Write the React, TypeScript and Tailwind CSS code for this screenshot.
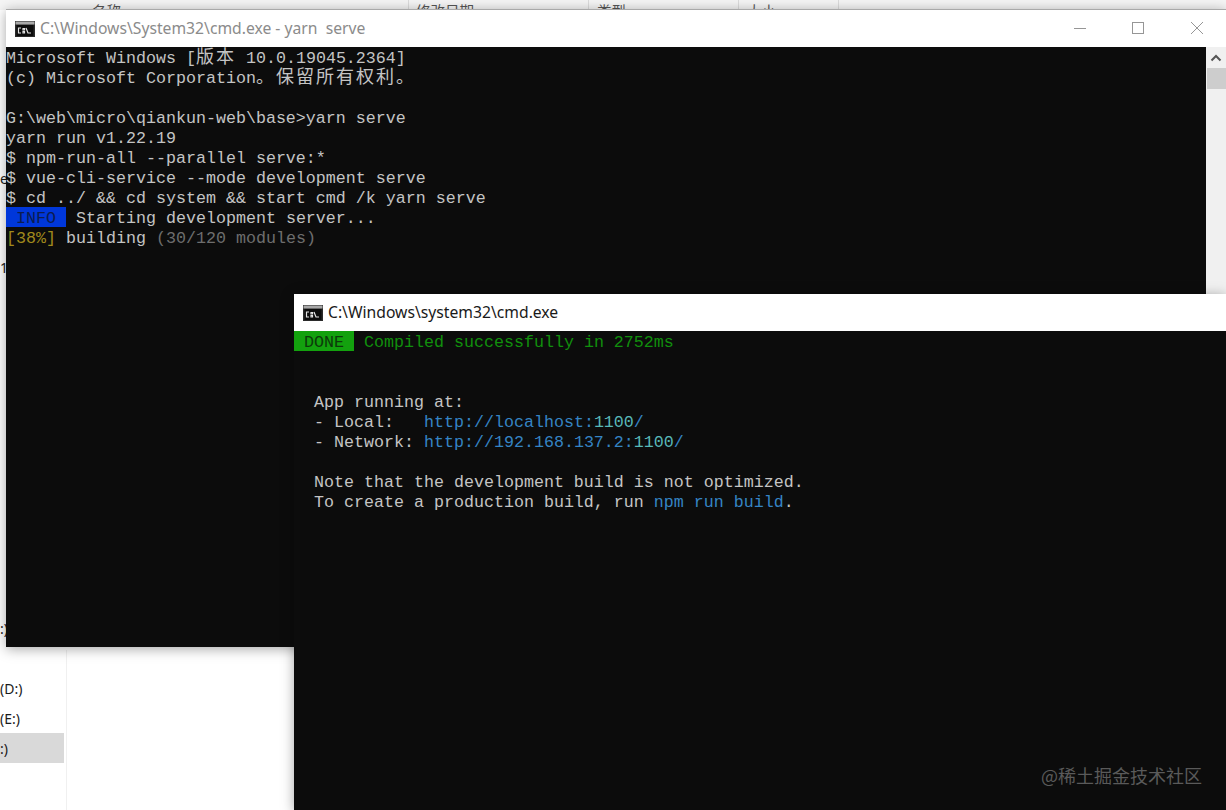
import React from 'react'

const mono = 'font-["Liberation_Mono","Noto_Sans_CJK_SC",monospace] text-[16.67px] leading-6 h-5 whitespace-pre'
const cjk = 'font-["Noto_Sans_CJK_SC",sans-serif] text-[18px] tracking-[2px] leading-[0]'
const ui = 'font-["Noto_Sans","Liberation_Sans",sans-serif]'
const cjkUi = 'font-["Noto_Sans_CJK_SC",sans-serif]'

function CmdIcon() {
  return (
    <svg width="20" height="16" viewBox="0 0 20 16" className="shrink-0">
      <rect width="20" height="16" fill="#2b2b2b" />
      <rect x="0.5" y="0.5" width="19" height="3" fill="#a8a8a8" />
      <rect x="1.5" y="4" width="17" height="11" fill="#0c0c0c" />
      <path d="M6 7H3.5v5H6M8 7.5h1.5v1.5H8zM8 10.5h1.5V12H8zM11 7l2 5h3" fill="none" stroke="#e4e4e4" strokeWidth="1.2" />
    </svg>
  )
}

function Line({ children }: { children?: React.ReactNode }) {
  return <div className={mono}>{children}</div>
}

function FirstWindow() {
  return (
    <div className="absolute left-[6px] top-[9px] w-[1220px] h-[638px] flex flex-col border-t border-[#a9a9a9] shadow-[0_2px_12px_rgba(0,0,0,0.35)]">
      <div className="h-[37px] bg-white flex items-center pl-[9px] shrink-0">
        <CmdIcon />
        <span className={`${ui} ml-[5px] text-[15.7px] text-[#8b8b8b]`}>C:\Windows\System32\cmd.exe - yarn&nbsp; serve</span>
        <div className="ml-auto -mt-px flex items-center text-[#969696]">
          <svg width="14" height="14" viewBox="0 0 14 14" className="mr-[44px]">
            <path d="M1 7.5h12" stroke="currentColor" />
          </svg>
          <svg width="14" height="14" viewBox="0 0 14 14" className="mr-[45px]">
            <rect x="1.5" y="1.5" width="11" height="11" fill="none" stroke="currentColor" />
          </svg>
          <svg width="14" height="14" viewBox="0 0 14 14" className="mr-[22px]">
            <path d="M1 1l12 12M13 1L1 13" stroke="currentColor" />
          </svg>
        </div>
      </div>
      <div className="flex-1 flex min-h-0">
        <div className="flex-1 bg-[#0c0c0c] text-[#c4c4c4]">
          <Line>Microsoft Windows [<span className={cjk}>版本</span> 10.0.19045.2364]</Line>
          <Line>(c) Microsoft Corporation<span className={cjk}>。保留所有权利。</span></Line>
          <Line />
          <Line>G:\web\micro\qiankun-web\base&gt;yarn serve</Line>
          <Line>yarn run v1.22.19</Line>
          <Line>$ npm-run-all --parallel serve:*</Line>
          <Line>$ vue-cli-service --mode development serve</Line>
          <Line>$ cd ../ &amp;&amp; cd system &amp;&amp; start cmd /k yarn serve</Line>
          <Line>
            <span className="inline-block h-5 bg-[#0037da] text-[#0c1c50]"> INFO </span> Starting development server...
          </Line>
          <Line>
            <span className="text-[#a08a1c]">[38%]</span> building <span className="text-[#6e6e6e]">(30/120 modules)</span>
          </Line>
        </div>
        <div className="w-5 bg-[#f0f0f0] flex flex-col shrink-0">
          <div className="h-[21px] flex items-center justify-center">
            <svg width="12" height="8" viewBox="0 0 12 8">
              <path d="M1.5 6.5L6 2l4.5 4.5" fill="none" stroke="#555" strokeWidth="2" />
            </svg>
          </div>
          <div className="h-[21px] bg-[#cdcdcd] ml-[1px]" />
        </div>
      </div>
    </div>
  )
}

function SecondWindow() {
  return (
    <div className="absolute left-[294px] top-[294px] right-0 bottom-0 flex flex-col shadow-[0_2px_12px_rgba(0,0,0,0.35)]">
      <div className="h-[37px] bg-white flex items-center pl-[9px] shrink-0">
        <CmdIcon />
        <span className={`${ui} ml-[5px] text-[15.7px] text-[#1a1a1a]`}>C:\Windows\system32\cmd.exe</span>
      </div>
      <div className="flex-1 bg-[#0c0c0c] text-[#c4c4c4] relative">
        <Line>
          <span className="inline-block h-5 bg-[#13a10e] text-[#0c3a0a]"> DONE </span> <span className="text-[#118f0d]">Compiled successfully in 2752ms</span>
        </Line>
        <Line />
        <Line />
        <Line>  App running at:</Line>
        <Line>  - Local:   <span className="text-[#3584c4]">http://localhost:<span className="text-[#58b8b8]">1100</span>/</span></Line>
        <Line>  - Network: <span className="text-[#3584c4]">http://192.168.137.2:<span className="text-[#58b8b8]">1100</span>/</span></Line>
        <Line />
        <Line>  Note that the development build is not optimized.</Line>
        <Line>  To create a production build, run <span className="text-[#3584c4]">npm run build</span>.</Line>
        <span className={`${cjkUi} absolute right-[24px] bottom-[23px] text-[18px] leading-6 text-[#5a5a5a]`}>@稀土掘金技术社区</span>
      </div>
    </div>
  )
}

export default function App() {
  return (
    <div className={`${ui} relative w-[1226px] h-[810px] overflow-hidden bg-white text-[#1a1a1a]`}>
      {/* explorer behind the consoles */}
      <div className={`${cjkUi} flex h-[10px] bg-[#f5f5f5] overflow-hidden text-[14.5px] text-[#555] leading-[18px]`}>
        <div className="w-[409px] border-r border-[#dcdcdc] pl-[92px] pt-[2px]">名称</div>
        <div className="w-[180px] border-r border-[#dcdcdc] pl-[7px] pt-[2px]">修改日期</div>
        <div className="w-[150px] border-r border-[#dcdcdc] pl-[8px] pt-[2px]">类型</div>
        <div className="w-[100px] border-r border-[#dcdcdc] pl-[8px] pt-[2px]">大小</div>
      </div>
      <div className="absolute left-0 top-[170px] text-[14px] leading-[18px]">e</div>
      <div className="absolute left-0 top-[259px] text-[14px] leading-[18px]">1</div>
      <div className="absolute left-0 top-[620px] text-[14px] leading-[18px]">:)</div>
      <div className="absolute left-0 top-[650px] bottom-0 w-[67px] border-r border-[#f0f0f0] flex flex-col pt-[23px] text-[14px]">
        <div className="h-[30px] flex items-center">(D:)</div>
        <div className="h-[30px] flex items-center">(E:)</div>
        <div className="h-[30px] w-[64px] flex items-center bg-[#d9d9d9]">:)</div>
      </div>
      <FirstWindow />
      <SecondWindow />
    </div>
  )
}
